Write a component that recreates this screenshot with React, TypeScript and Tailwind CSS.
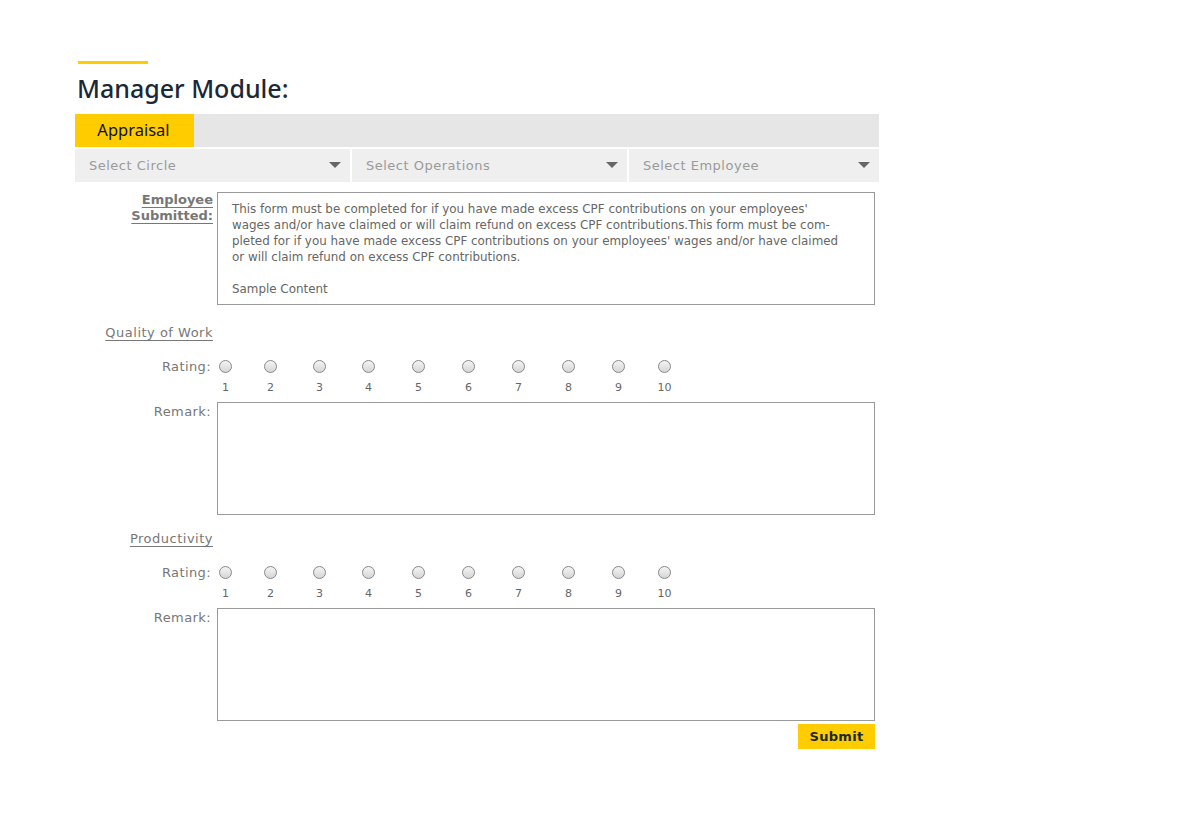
import React from "react";

const offsets = [
  "ml-0",
  "ml-[32px]",
  "ml-[36px]",
  "ml-[36px]",
  "ml-[37px]",
  "ml-[37px]",
  "ml-[37px]",
  "ml-[37px]",
  "ml-[37px]",
  "ml-[33px]",
];

function Caret() {
  return (
    <svg width="12" height="7" viewBox="0 0 12 7">
      <path d="M0 0 L12 0 L6 6 Z" fill="#666" />
    </svg>
  );
}

function SelectBox({ label, width }: { label: string; width: string }) {
  return (
    <div className={`${width} h-[33px] bg-[#efefef] flex items-center justify-between pl-[14px] pr-[9px]`}>
      <span className="text-[13px] text-[#9a9a9a] tracking-[0.5px]">{label}</span>
      <Caret />
    </div>
  );
}

function Rating() {
  return (
    <div className="flex">
      <div className="w-[138px] pr-[2px] text-right text-[13px] text-[#777] tracking-[0.4px] leading-[14px]">
        Rating:
      </div>
      <div className="flex ml-[6px]">
        {offsets.map((cls, i) => (
          <label key={i} className={`${cls} flex flex-col items-center w-[13px]`}>
            <span className="w-[13px] h-[13px] rounded-full border border-[#888] bg-gradient-to-b from-[#f4f4f4] to-[#d6d6d6]" />
            <span className="text-[11px] text-[#666] mt-[9px] leading-[12px] whitespace-nowrap">{i + 1}</span>
          </label>
        ))}
      </div>
    </div>
  );
}

function Remark() {
  return (
    <div className="flex mt-[8px]">
      <div className="w-[138px] pr-[2px] text-right text-[13px] text-[#777] tracking-[0.4px] leading-[16px] pt-[2px]">
        Remark:
      </div>
      <textarea className="ml-[4px] w-[658px] h-[113px] border border-[#999] resize-none outline-none" />
    </div>
  );
}

function SectionTitle({ text }: { text: string }) {
  return (
    <div className="w-[138px] text-right text-[13px] text-[#777] tracking-[0.5px] underline underline-offset-[3px] leading-[16px] whitespace-nowrap">
      {text}
    </div>
  );
}

export default function App() {
  return (
    <main className="min-h-screen bg-white" style={{ fontFamily: "'DejaVu Sans', Verdana, sans-serif" }}>
      <div className="pt-[61px] pl-[75px] w-[879px]">
        <div className="ml-[3px] w-[70px] h-[3px] bg-[#ffcc00]" />
        <h1
          className="ml-[2px] mt-[6px] h-[44px] leading-[36px] text-[25px] font-medium text-[#1b2838]"
          style={{ fontFamily: "'Noto Sans', 'Open Sans', sans-serif" }}
        >
          Manager Module:
        </h1>

        <div className="h-[33px] bg-[#e6e6e6] flex">
          <div
            className="w-[119px] bg-[#ffcc00] flex items-center justify-center pr-[2px] text-[16.5px] text-[#111]"
            style={{ fontFamily: "'Noto Sans', 'Open Sans', sans-serif" }}
          >
            Appraisal
          </div>
        </div>

        <div className="flex gap-[2px] mt-[2px]">
          <SelectBox label="Select Circle" width="w-[275px]" />
          <SelectBox label="Select Operations" width="w-[275px]" />
          <SelectBox label="Select Employee" width="w-[250px]" />
        </div>

        <div className="flex mt-[10px]">
          <div className="w-[138px] text-right text-[13px] font-bold text-[#777] underline underline-offset-[3px] leading-[16px]">
            Employee
            <br />
            Submitted:
          </div>
          <div className="ml-[4px] w-[658px] h-[113px] border border-[#999] pl-[14px] pt-[8px] text-[11.9px] leading-[16px] text-[#666]">
            This form must be completed for if you have made excess CPF contributions on your employees'
            <br />
            wages and/or have claimed or will claim refund on excess CPF contributions.This form must be com-
            <br />
            pleted for if you have made excess CPF contributions on your employees' wages and/or have claimed
            <br />
            or will claim refund on excess CPF contributions.
            <br />
            <br />
            Sample Content
          </div>
        </div>

        <div className="mt-[20px]">
          <SectionTitle text="Quality of Work" />
        </div>
        <div className="mt-[19px]">
          <Rating />
        </div>
        <Remark />

        <div className="mt-[16px]">
          <SectionTitle text="Productivity" />
        </div>
        <div className="mt-[19px]">
          <Rating />
        </div>
        <Remark />

        <div className="flex justify-end pr-[4px] mt-[3px]">
          <button className="w-[77px] h-[25px] bg-[#ffcc00] text-[13px] font-bold tracking-[0.3px] text-[#1b2838]">
            Submit
          </button>
        </div>
      </div>
    </main>
  );
}
